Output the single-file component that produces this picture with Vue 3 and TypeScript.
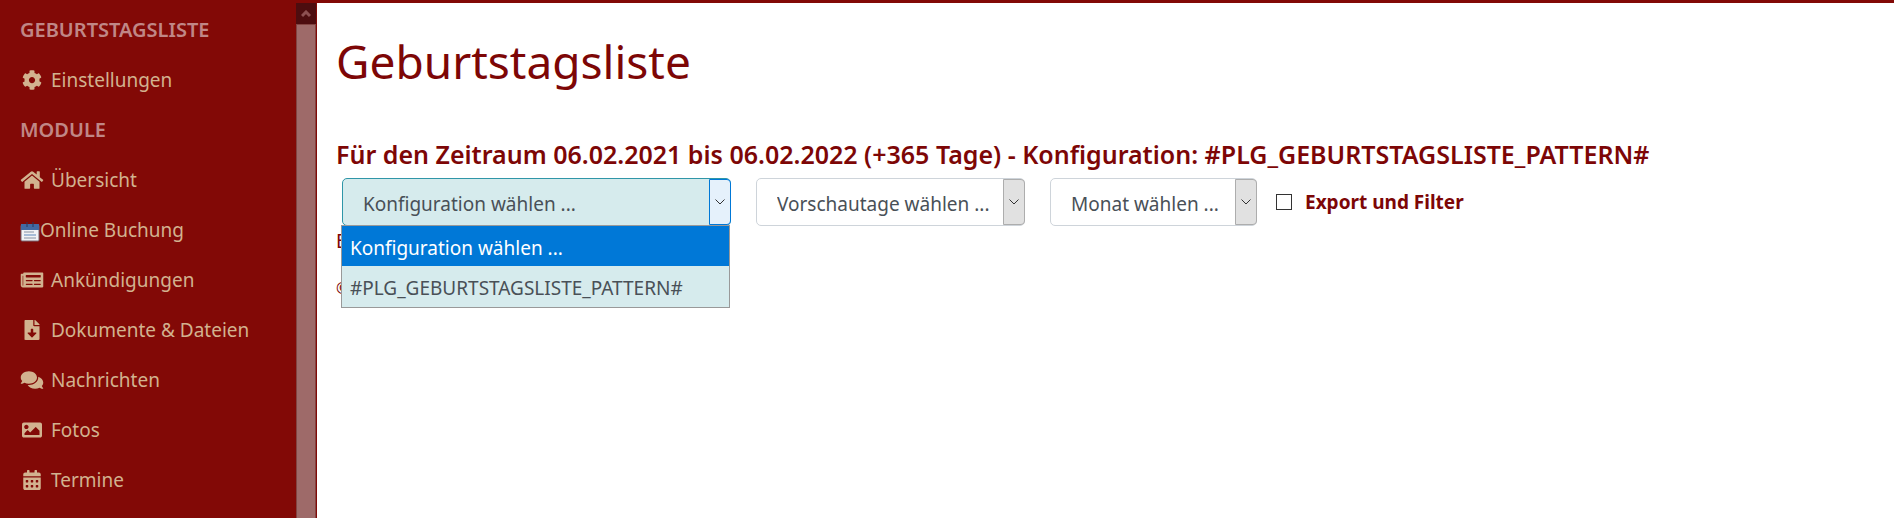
<script setup lang="ts">
import { ref } from 'vue'

interface MenuItem {
  label: string
  viewBox?: string
  path?: string
}
interface MenuGroup {
  title: string
  items: MenuItem[]
}

const groups: MenuGroup[] = [
  {
    title: 'Geburtstagsliste',
    items: [
      {
        label: 'Einstellungen',
        viewBox: '0 0 512 512',
        path: 'M487.4 315.7l-42.6-24.6c4.3-23.2 4.3-47 0-70.2l42.6-24.6c4.9-2.8 7.1-8.6 5.5-14-11.1-35.6-30-67.8-54.7-94.6-3.8-4.1-10-5.1-14.8-2.3L380.8 110c-17.9-15.4-38.5-27.3-60.8-35.1V25.8c0-5.6-3.9-10.5-9.4-11.7-36.7-8.2-74.3-7.8-109.2 0-5.5 1.2-9.4 6.1-9.4 11.7V75c-22.2 7.9-42.8 19.8-60.8 35.1L88.7 85.5c-4.9-2.8-11-1.9-14.8 2.3-24.7 26.7-43.6 58.9-54.7 94.6-1.700 5.400.6 11.200 5.500 14L67.300 221c-4.300 23.200-4.300 47 0 70.200l-42.600 24.600c-4.900 2.800-7.100 8.600-5.500 14 11.100 35.600 30 67.800 54.700 94.600 3.800 4.100 10 5.100 14.800 2.300l42.600-24.600c17.900 15.400 38.500 27.300 60.800 35.100v49.200c0 5.600 3.900 10.500 9.400 11.700 36.700 8.200 74.300 7.800 109.200 0 5.500-1.200 9.400-6.100 9.400-11.700v-49.200c22.200-7.900 42.800-19.800 60.800-35.100l42.600 24.600c4.900 2.800 11 1.900 14.800-2.300 24.700-26.700 43.600-58.900 54.700-94.600 1.500-5.500-.7-11.300-5.600-14.100zM256 336c-44.100 0-80-35.900-80-80s35.900-80 80-80 80 35.900 80 80-35.900 80-80 80z',
      },
    ],
  },
  {
    title: 'Module',
    items: [
      {
        label: 'Übersicht',
        viewBox: '0 0 576 512',
        path: 'M280.37 148.26L96 300.11V464a16 16 0 0 0 16 16l112.060-.29a16 16 0 0 0 15.920-16V368a16 16 0 0 1 16-16h64a16 16 0 0 1 16 16v95.640a16 16 0 0 0 16 16.050L464 480a16 16 0 0 0 16-16V300L295.670 148.260a12.190 12.190 0 0 0-15.300 0zM571.600 251.470L488 182.560V44.050a12 12 0 0 0-12-12h-56a12 12 0 0 0-12 12v72.610L318.470 43a48 48 0 0 0-61 0L4.340 251.470a12 12 0 0 0-1.600 16.900l25.500 31A12 12 0 0 0 45.150 301l235.220-193.740a12.190 12.190 0 0 1 15.300 0L530.900 301a12 12 0 0 0 16.900-1.600l25.500-31a12 12 0 0 0-1.700-16.930z',
      },
      { label: 'Online Buchung' },
      {
        label: 'Ankündigungen',
        viewBox: '0 0 576 512',
        path: 'M552 64H88c-13.255 0-24 10.745-24 24v8H24c-13.255 0-24 10.745-24 24v272c0 30.928 25.072 56 56 56h496c13.255 0 24-10.745 24-24V88c0-13.255-10.745-24-24-24zM56 400a8 8 0 0 1-8-8V144h16v248a8 8 0 0 1-8 8zm236-16H140c-6.627 0-12-5.373-12-12v-8c0-6.627 5.373-12 12-12h152c6.627 0 12 5.373 12 12v8c0 6.627-5.373 12-12 12zm208 0H348c-6.627 0-12-5.373-12-12v-8c0-6.627 5.373-12 12-12h152c6.627 0 12 5.373 12 12v8c0 6.627-5.373 12-12 12zm-208-96H140c-6.627 0-12-5.373-12-12v-8c0-6.627 5.373-12 12-12h152c6.627 0 12 5.373 12 12v8c0 6.627-5.373 12-12 12zm208 0H348c-6.627 0-12-5.373-12-12v-8c0-6.627 5.373-12 12-12h152c6.627 0 12 5.373 12 12v8c0 6.627-5.373 12-12 12zm0-96H140c-6.627 0-12-5.373-12-12v-40c0-6.627 5.373-12 12-12h360c6.627 0 12 5.373 12 12v40c0 6.627-5.373 12-12 12z',
      },
      {
        label: 'Dokumente & Dateien',
        viewBox: '0 0 384 512',
        path: 'M224 136V0H24C10.700 0 0 10.700 0 24v464c0 13.300 10.700 24 24 24h336c13.300 0 24-10.700 24-24V160H248c-13.200 0-24-10.800-24-24zm76.450 211.360l-96.420 95.700c-6.650 6.610-17.390 6.610-24.040 0l-96.420-95.700C73.420 337.290 80.540 320 94.820 320H160v-80c0-8.840 7.160-16 16-16h32c8.840 0 16 7.160 16 16v80h65.180c14.280 0 21.400 17.290 11.270 27.360zM377 105L279.100 7c-4.500-4.500-10.600-7-17-7H256v128h128v-6.100c0-6.300-2.500-12.400-7-16.900z',
      },
      {
        label: 'Nachrichten',
        viewBox: '0 0 576 512',
        path: 'M416 192c0-88.400-93.100-160-208-160S0 103.600 0 192c0 34.300 14.100 65.900 38 92-13.400 30.200-35.500 54.200-35.800 54.500-2.200 2.300-2.800 5.700-1.500 8.700S4.800 352 8 352c36.600 0 66.900-12.300 88.700-25 32.200 15.700 70.300 25 111.300 25 114.900 0 208-71.600 208-160zm122 220c23.900-26 38-57.700 38-92 0-66.900-53.500-124.200-129.300-148.100.9 6.600 1.300 13.300 1.300 20.100 0 105.900-107.700 192-240 192-10.800 0-21.300-.8-31.700-1.900C207.800 439.600 281.800 480 368 480c41 0 79.100-9.200 111.300-25 21.800 12.700 52.100 25 88.700 25 3.200 0 6.100-1.900 7.300-4.800 1.300-2.900.7-6.300-1.500-8.700-.3-.3-22.400-24.200-35.800-54.500z',
      },
      {
        label: 'Fotos',
        viewBox: '0 0 512 512',
        path: 'M464 448H48c-26.510 0-48-21.490-48-48V112c0-26.510 21.490-48 48-48h416c26.510 0 48 21.490 48 48v288c0 26.510-21.490 48-48 48zM112 120c-30.928 0-56 25.072-56 56s25.072 56 56 56 56-25.072 56-56-25.072-56-56-56zM64 384h384V272l-87.515-87.515c-4.686-4.686-12.284-4.686-16.971 0L208 320l-55.515-55.515c-4.686-4.686-12.284-4.686-16.971 0L64 336v48z',
      },
      {
        label: 'Termine',
        viewBox: '0 0 448 512',
        path: 'M0 464c0 26.500 21.500 48 48 48h352c26.500 0 48-21.500 48-48V192H0v272zm320-196c0-6.600 5.400-12 12-12h40c6.600 0 12 5.400 12 12v40c0 6.600-5.400 12-12 12h-40c-6.600 0-12-5.400-12-12v-40zm0 128c0-6.600 5.400-12 12-12h40c6.600 0 12 5.400 12 12v40c0 6.600-5.400 12-12 12h-40c-6.600 0-12-5.400-12-12v-40zM192 268c0-6.600 5.400-12 12-12h40c6.600 0 12 5.400 12 12v40c0 6.600-5.400 12-12 12h-40c-6.600 0-12-5.400-12-12v-40zm0 128c0-6.600 5.400-12 12-12h40c6.600 0 12 5.400 12 12v40c0 6.600-5.400 12-12 12h-40c-6.600 0-12-5.400-12-12v-40zM64 268c0-6.600 5.400-12 12-12h40c6.600 0 12 5.400 12 12v40c0 6.600-5.400 12-12 12H76c-6.600 0-12-5.400-12-12v-40zm0 128c0-6.600 5.400-12 12-12h40c6.600 0 12 5.400 12 12v40c0 6.600-5.400 12-12 12H76c-6.600 0-12-5.400-12-12v-40zM400 64h-48V16c0-8.800-7.200-16-16-16h-32c-8.800 0-16 7.200-16 16v48H160V16c0-8.800-7.200-16-16-16h-32c-8.800 0-16 7.200-16 16v48H48C21.500 64 0 85.500 0 112v48h448v-48c0-26.500-21.500-48-48-48z',
      },
    ],
  },
]

const configurations = ['Konfiguration wählen ...', '#PLG_GEBURTSTAGSLISTE_PATTERN#']
const configuration = ref(configurations[0])
const listOpen = ref(true)
const exportFilter = ref(false)

function choose(option: string) {
  configuration.value = option
  listOpen.value = false
}
</script>

<template>
  <div class="page">
    <aside class="sidebar">
      <nav class="menu">
        <section v-for="group in groups" :key="group.title">
          <h2 class="menu-title">{{ group.title }}</h2>
          <ul class="menu-list">
            <li v-for="item in group.items" :key="item.label">
              <a href="#" class="menu-link" :class="{ tight: !item.path }">
                <svg v-if="item.path" class="icon" :viewBox="item.viewBox" aria-hidden="true">
                  <path :d="item.path" fill="currentColor" />
                </svg>
                <svg v-else class="calendar" viewBox="0 0 20 20" aria-hidden="true">
                  <rect x="1" y="3" width="18" height="16" rx="1" fill="#f2f2f5" stroke="#77656e" />
                  <path d="M1 2h18v6H1z" fill="#426aa3" />
                  <path d="M7 0v5M13 0v5" stroke="#27395c" stroke-width="1" />
                  <path d="M4 10h10M4 16h12" stroke="#8792a3" stroke-width="1" />
                  <path d="M4 13h12" stroke="#5d86bb" stroke-width="1" />
                </svg>
                <span>{{ item.label }}</span>
              </a>
            </li>
          </ul>
        </section>
      </nav>
      <div class="scrollbar">
        <button type="button" class="scroll-up" aria-label="Nach oben">
          <svg viewBox="0 0 10 8" aria-hidden="true">
            <path d="M1 6l4-4 4 4" fill="none" stroke="currentColor" stroke-width="3" />
          </svg>
        </button>
        <div class="thumb"></div>
      </div>
    </aside>

    <main class="content">
      <h1>Geburtstagsliste</h1>
      <h3>Für den Zeitraum 06.02.2021 bis 06.02.2022 (+365 Tage) - Konfiguration: #PLG_GEBURTSTAGSLISTE_PATTERN#</h3>

      <form class="filters" @submit.prevent>
        <div class="field config active">
          <select v-model="configuration" aria-label="Konfiguration" @mousedown.prevent="listOpen = !listOpen">
            <option v-for="option in configurations" :key="option">{{ option }}</option>
          </select>
          <span class="arrow">
            <svg viewBox="0 0 10 6" aria-hidden="true"><path d="M.5.5L5 5 9.500.5" /></svg>
          </span>
          <ul v-if="listOpen" class="options" role="listbox">
            <li
              v-for="option in configurations"
              :key="option"
              role="option"
              :aria-selected="option === configuration"
              :class="{ selected: option === configuration }"
              @click="choose(option)"
            >
              {{ option }}
            </li>
          </ul>
        </div>
        <div class="field days">
          <select aria-label="Vorschautage">
            <option>Vorschautage wählen ...</option>
          </select>
          <span class="arrow">
            <svg viewBox="0 0 10 6" aria-hidden="true"><path d="M.5.5L5 5 9.500.5" /></svg>
          </span>
        </div>
        <div class="field month">
          <select aria-label="Monat">
            <option>Monat wählen ...</option>
          </select>
          <span class="arrow">
            <svg viewBox="0 0 10 6" aria-hidden="true"><path d="M.5.5L5 5 9.500.5" /></svg>
          </span>
        </div>
        <label class="check">
          <input v-model="exportFilter" type="checkbox" />
          <span>Export und Filter</span>
        </label>
      </form>

      <p class="note">E</p>
      <p class="note small">©</p>
    </main>
  </div>
</template>

<style>
body {
  background: #fff;
}
</style>

<style scoped>
.page {
  display: flex;
  height: 100vh;
  overflow: hidden;
  box-sizing: border-box;
  border-top: 3px solid #820906;
  color: #7d0606;
  font: 19px/30px "Noto Sans", "Open Sans", sans-serif;
}
.sidebar {
  display: flex;
  flex: 0 0 317px;
  box-sizing: border-box;
  border-right: 1px solid #820906;
  background: #820906;
}
.menu {
  flex: 1;
  overflow: hidden;
  padding-top: 2px;
}
.menu-title {
  margin: 0;
  padding: 10px 20px;
  color: #c08786;
  font-size: 20px;
  font-weight: 600;
  line-height: 30px;
  text-transform: uppercase;
}
.menu-list {
  margin: 0;
  padding: 0;
  list-style: none;
}
.menu-link {
  display: flex;
  align-items: center;
  gap: 7px;
  padding: 10px 20px;
  color: #d2b28f;
  text-decoration: none;
}
.menu-link.tight {
  gap: 0;
}
.icon {
  width: 24px;
  height: 20px;
}
.calendar {
  width: 20px;
  height: 20px;
  margin-top: 4px;
}
.scrollbar {
  display: flex;
  flex-direction: column;
  flex: 0 0 20px;
}
.scroll-up {
  height: 21px;
  padding: 0;
  border: 0;
  background: #4d0d0f;
  color: #8d5051;
}
.scroll-up svg {
  display: block;
  width: 10px;
  height: 8px;
  margin: auto;
}
.thumb {
  flex: 1;
  border: 1px solid #824442;
  border-bottom: 0;
  background: #9e6a69;
}
.content {
  flex: 1;
  min-width: 0;
  padding: 28px 19px;
}
h1 {
  margin: 0 0 45px;
  font-size: 46px;
  font-weight: 400;
  line-height: 60px;
}
h3 {
  margin: 0 0 6px;
  font-size: 25px;
  font-weight: 600;
  line-height: 36px;
  white-space: nowrap;
}
.filters {
  display: flex;
  align-items: center;
  padding-left: 6px;
}
.field {
  position: relative;
  height: 48px;
  margin-right: 25px;
}
.config {
  width: 389px;
}
.days {
  width: 269px;
}
.month {
  width: 207px;
  margin-right: 19px;
}
select {
  appearance: none;
  box-sizing: border-box;
  width: 100%;
  height: 100%;
  padding: 3px 20px 0;
  border: 1px solid #ced4da;
  border-radius: 5px;
  background: #fff;
  color: #495057;
  font: inherit;
}
.active select {
  border-color: #2f96a8;
  background: #d6ebed;
}
.arrow {
  position: absolute;
  top: 1px;
  right: 0;
  bottom: 1px;
  display: flex;
  align-items: center;
  justify-content: center;
  box-sizing: border-box;
  width: 22px;
  border: 1px solid #adadad;
  border-radius: 0 4px 4px 0;
  background: #e1e1e1;
  pointer-events: none;
}
.active .arrow {
  border-color: #0078d7;
  background: #e5f1fb;
}
.arrow svg {
  width: 10px;
  height: 6px;
  fill: none;
  stroke: #333;
}
.options {
  position: absolute;
  z-index: 1;
  top: 100%;
  left: -1px;
  box-sizing: border-box;
  width: 100%;
  margin: -1px 0 0;
  padding: 0;
  border: 1px solid #999;
  background: #d6ebed;
  color: #495057;
  list-style: none;
}
.options li {
  padding: 7px 8px 4px;
}
.options .selected {
  padding-bottom: 3px;
  background: #0078d7;
  color: #fff;
}
.check {
  display: flex;
  align-items: center;
  gap: 13px;
  font-weight: 700;
}
.check input {
  appearance: none;
  box-sizing: border-box;
  width: 16px;
  height: 16px;
  margin: 0;
  border: 1px solid #333;
  background: #fff;
}
.check input:checked {
  background: #7d0606;
}
.note {
  margin: 0 0 20px;
}
.small {
  font-size: 16px;
  line-height: 24px;
}
</style>
